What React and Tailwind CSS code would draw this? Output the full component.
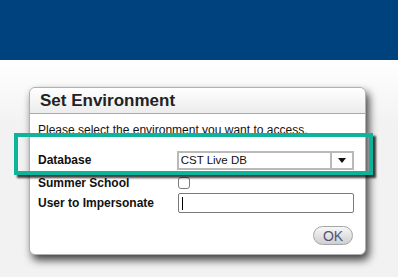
export default function App() {
  return (
    <div
      className="relative w-[398px] h-[277px] overflow-hidden bg-[#f3f3f3] text-[#111]"
      style={{ fontFamily: '"Liberation Sans", Arial, sans-serif' }}
    >
      {/* Top banner */}
      <div className="h-[60px] bg-[#00427e]" />

      {/* Page body */}
      <div className="h-[217px] bg-gradient-to-b from-white to-[#f2f2f2] to-[30%] pt-[27px] pl-[29px]">
        <div className="w-[337px] h-[168px] bg-white rounded-[6px] border border-[#b0b0b0] shadow-[3px_5px_8px_rgba(0,0,0,0.75)] flex flex-col">
          {/* Title bar */}
          <div className="h-[26px] shrink-0 rounded-t-[6px] border-b border-[#a9a9a9] bg-gradient-to-b from-white to-[#ececec] pl-[10px] flex items-center">
            <span className="text-[17px] font-bold leading-none text-[#222]">Set Environment</span>
          </div>

          <div className="pl-[8px] pr-[11px] flex flex-col">
            <p className="mt-[8px] text-[12px] leading-[16px]">
              Please select the environment you want to access.
            </p>

            {/* Database */}
            <div className="mt-[12px] h-[20px] flex items-center">
              <span className="w-[140px] text-[12px] font-bold">Database</span>
              <div className="w-[179px] h-[19px] border-2 border-[#b9b9b9] bg-white flex items-stretch">
                <span className="flex-1 pl-[2px] text-[11.5px] leading-[15px]">CST Live DB</span>
                <span className="w-[22px] border-l-2 border-[#b9b9b9] flex items-center justify-center">
                  <svg width="8" height="5" viewBox="0 0 8 5">
                    <path d="M0 0h8L4 5z" fill="#111" />
                  </svg>
                </span>
              </div>
            </div>

            {/* Summer School */}
            <div className="mt-[4px] h-[17px] flex items-center">
              <span className="w-[140px] text-[12px] font-bold">Summer School</span>
              <span className="w-[12px] h-[12px] border border-[#7a7a7a] rounded-[3px] bg-white" />
            </div>

            {/* User */}
            <div className="mt-[2px] h-[20px] flex items-center">
              <span className="w-[140px] text-[12px] font-bold">User to Impersonate</span>
              <div className="w-[177px] h-[20px] border border-[#7a7a7a] rounded-[2px] bg-white flex items-center pl-[3px]">
                <span className="w-px h-[13px] bg-black" />
              </div>
            </div>

            <div className="mt-[13px] flex justify-end pr-[1px]">
              <button className="w-[40px] h-[19px] rounded-full border border-[#a6a6a6] bg-gradient-to-b from-[#f7f7f7] to-[#cfcfcf] text-[14px] leading-none text-[#505374]">
                OK
              </button>
            </div>
          </div>
        </div>
      </div>

      {/* Highlight frame over the Database row */}
      <div className="absolute left-[14px] top-[133px] w-[359px] h-[42px] border-4 border-[#0db39b] shadow-[3px_3px_2px_rgba(0,0,0,0.75)]" />
    </div>
  );
}
